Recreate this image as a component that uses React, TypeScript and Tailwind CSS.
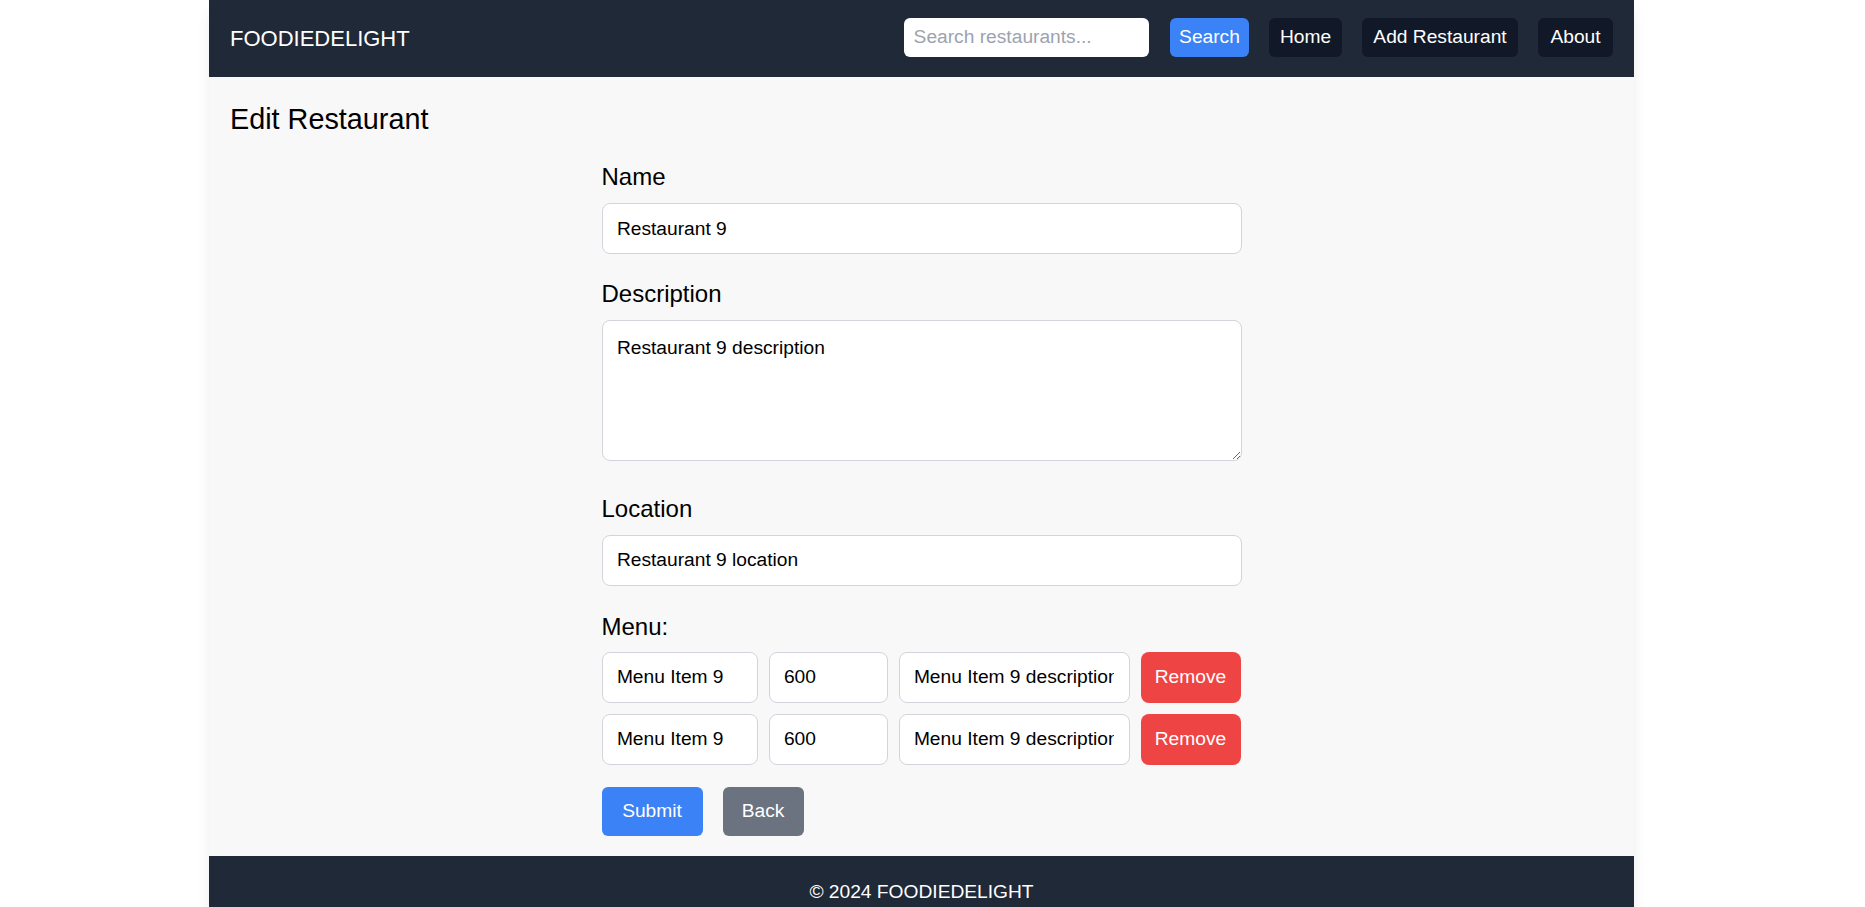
import { useState } from "react";

interface MenuItem {
  name: string;
  price: string;
  description: string;
}

const navLinks = [
  { label: "Home", width: "w-[73px]" },
  { label: "Add Restaurant", width: "w-[156px]" },
  { label: "About", width: "w-[75px]" },
];

const initialMenu: MenuItem[] = [
  { name: "Menu Item 9", price: "600", description: "Menu Item 9 description" },
  { name: "Menu Item 9", price: "600", description: "Menu Item 9 description" },
];

export default function App() {
  const [name, setName] = useState("Restaurant 9");
  const [description, setDescription] = useState("Restaurant 9 description");
  const [location, setLocation] = useState("Restaurant 9 location");
  const [menu, setMenu] = useState<MenuItem[]>(initialMenu);
  const [query, setQuery] = useState("");

  const updateItem = (i: number, key: keyof MenuItem, value: string) => {
    setMenu((prev) => prev.map((m, idx) => (idx === i ? { ...m, [key]: value } : m)));
  };

  const inputCls =
    "h-[51px] rounded-lg border border-[#d1d5db] bg-white px-[14.4px] text-[19.2px] text-black outline-none";

  return (
    <div className="min-h-screen bg-white font-['Liberation_Sans',Arial,sans-serif]">
      <div className="ml-[209px] w-[1425px] bg-[#f8f8f8] shadow-lg">
        <header className="flex h-[77px] items-center justify-between bg-[#1f2937] px-[21px]">
          <div className="text-[22px] text-white">FOODIEDELIGHT</div>
          <div className="mb-[3px] flex items-center gap-5">
            <input
              value={query}
              onChange={(e) => setQuery(e.target.value)}
              placeholder="Search restaurants..."
              className="mr-[1px] h-[39px] w-[245px] rounded-md bg-white px-[9.6px] text-[19.2px] text-black outline-none placeholder:text-[#9ca3af]"
            />
            <button className="h-[39px] w-[79px] rounded-md bg-[#3b82f6] text-[19.2px] text-white">Search</button>
            {navLinks.map((link) => (
              <a
                key={link.label}
                className={`flex h-[39px] items-center justify-center rounded-md bg-[#111827] text-[19.2px] text-white ${link.width}`}
              >
                {link.label}
              </a>
            ))}
          </div>
        </header>

        <main className="px-[21px] pt-[23px] pb-[20px]">
          <h1 className="text-[28.8px] leading-[38.4px] text-black">Edit Restaurant</h1>
          <form className="mx-auto mt-[22px] w-[640px]" onSubmit={(e) => e.preventDefault()}>
            <label className="mb-[9px] block text-[24px] leading-[33.6px] text-black">Name</label>
            <input value={name} onChange={(e) => setName(e.target.value)} className={`${inputCls} mb-[23px] block w-full`} />

            <label className="mb-[9.6px] block text-[24px] leading-[33.6px] text-black">Description</label>
            <textarea
              value={description}
              onChange={(e) => setDescription(e.target.value)}
              className="mb-[30.5px] block h-[141px] w-full rounded-lg border border-[#d1d5db] bg-white px-[14.4px] pt-[13px] text-[19.2px] leading-[28.8px] text-black outline-none"
            />

            <label className="mb-[9.4px] block text-[24px] leading-[33.6px] text-black">Location</label>
            <input value={location} onChange={(e) => setLocation(e.target.value)} className={`${inputCls} mb-[24.6px] block w-full`} />

            <label className="mb-[8px] block text-[24px] leading-[33.6px] text-black">Menu:</label>
            <div className="flex flex-col gap-[11px]">
              {menu.map((item, i) => (
                <div key={i} className="flex gap-[11px]">
                  <input value={item.name} onChange={(e) => updateItem(i, "name", e.target.value)} className={`${inputCls} w-[156px]`} />
                  <input value={item.price} onChange={(e) => updateItem(i, "price", e.target.value)} className={`${inputCls} w-[119px]`} />
                  <input value={item.description} onChange={(e) => updateItem(i, "description", e.target.value)} className={`${inputCls} w-[231px]`} />
                  <button
                    type="button"
                    onClick={() => setMenu((prev) => prev.filter((_, idx) => idx !== i))}
                    className="h-[51px] w-[100px] rounded-lg bg-[#ef4444] text-[19.2px] text-white"
                  >
                    Remove
                  </button>
                </div>
              ))}
            </div>

            <div className="mt-[22px] flex gap-5">
              <button type="submit" className="h-[49px] w-[101px] rounded-md bg-[#3b82f6] text-[19.2px] text-white">Submit</button>
              <button type="button" className="h-[49px] w-[81px] rounded-md bg-[#6b7280] text-[19.2px] text-white">Back</button>
            </div>
          </form>
        </main>

        <footer className="bg-[#1f2937] pt-[22px] pb-[20px] text-center text-[19.2px] leading-[28.8px] text-white">
          © 2024 FOODIEDELIGHT
        </footer>
      </div>
    </div>
  );
}
